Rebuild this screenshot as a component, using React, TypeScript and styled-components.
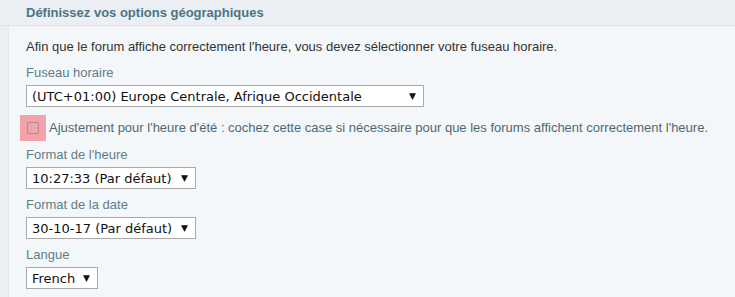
import styled, { createGlobalStyle } from 'styled-components'

const GlobalStyle = createGlobalStyle`
  html, body {
    margin: 0;
    padding: 0;
    background: #ebeff3;
    font-family: 'Liberation Sans', Arial, sans-serif;
  }
`

const Page = styled.div`
  width: 735px;
  height: 297px;
  overflow: hidden;
  display: flex;
  flex-direction: column;
  background: #ebeff3;
`

const Header = styled.h2`
  margin: 0;
  height: 27px;
  border-bottom: 1px solid #dde3e8;
  padding-left: 26px;
  display: flex;
  align-items: center;
  font-size: 13px;
  font-weight: bold;
  color: #4d7484;
`

const Panel = styled.div`
  flex: 1;
  margin-left: 8px;
  background: #f3f7fa;
  border-left: 1px solid #e4e9ed;
  padding: 13px 0 0 17px;
  display: flex;
  flex-direction: column;
  font-size: 13px;
`

const Intro = styled.p`
  margin: 0 0 10px;
  line-height: 16px;
  color: #333;
`

const Field = styled.div`
  display: flex;
  flex-direction: column;
  align-items: flex-start;
  margin-bottom: 8px;
`

const Label = styled.label`
  line-height: 16px;
  margin-bottom: 4px;
  color: #5f7d88;
`

const Select = styled.div<{ $width: number }>`
  box-sizing: border-box;
  width: ${p => p.$width}px;
  height: 22px;
  border: 1px solid #a9a9a9;
  background: #fff;
  display: flex;
  align-items: center;
  justify-content: space-between;
  padding: 0 7px 0 5px;
  font-family: 'DejaVu Sans', Verdana, sans-serif;
  font-size: 13px;
  color: #111;
  white-space: nowrap;
`

const Arrow = styled.span`
  font-size: 9px;
  color: #111;
`

const CheckRow = styled.div`
  display: flex;
  align-items: center;
  margin: 0 0 6px -6px;
`

const CheckHighlight = styled.span`
  width: 26px;
  height: 26px;
  background: #f2a3a9;
  display: flex;
  align-items: center;
  justify-content: center;
  margin-right: 3px;
`

const CheckBox = styled.span`
  box-sizing: border-box;
  width: 12px;
  height: 12px;
  border: 1px solid #bb8489;
  border-radius: 2px;
  background: #eda6ab;
`

const CheckText = styled.span`
  color: #4e6873;
  line-height: 16px;
`

type DropProps = { label?: string; value: string; width: number }

const Drop = ({ label, value, width }: DropProps) => (
  <Field>
    <Label>{label}</Label>
    <Select $width={width}>
      <span>{value}</span>
      <Arrow>▼</Arrow>
    </Select>
  </Field>
)

export default function App() {
  return (
    <Page>
      <GlobalStyle />
      <Header>Définissez vos options géographiques</Header>
      <Panel>
        <Intro>
          Afin que le forum affiche correctement l'heure, vous devez sélectionner votre fuseau horaire.
        </Intro>
        <Drop label='Fuseau horaire' value='(UTC+01:00) Europe Centrale, Afrique Occidentale' width={398} />
        <CheckRow>
          <CheckHighlight>
            <CheckBox />
          </CheckHighlight>
          <CheckText>
            Ajustement pour l'heure d'été : cochez cette case si nécessaire pour que les forums affichent correctement l'heure.
          </CheckText>
        </CheckRow>
        <Drop label="Format de l'heure" value='10:27:33 (Par défaut)' width={170} />
        <Drop label='Format de la date' value='30-10-17 (Par défaut)' width={170} />
        <Drop label='Langue' value='French' width={72} />
      </Panel>
    </Page>
  )
}
